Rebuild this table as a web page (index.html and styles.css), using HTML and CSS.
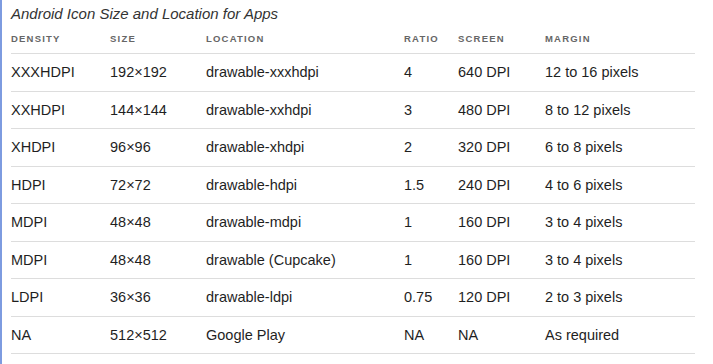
FILE: index.html
```html
<!DOCTYPE html>
<html lang="en">
<head>
  <meta charset="UTF-8" />
  <title>Android Icon Sizes</title>
  <link rel="stylesheet" href="styles.css">
</head>
<body>
  <div class="wrap">
    <table class="icons">
      <caption>Android Icon Size and Location for Apps</caption>
      <thead>
        <tr>
          <th class="c-density">Density</th>
          <th class="c-size">Size</th>
          <th class="c-loc">Location</th>
          <th class="c-ratio">Ratio</th>
          <th class="c-screen">Screen</th>
          <th>Margin</th>
        </tr>
      </thead>
      <tbody>
        <tr><td>XXXHDPI</td><td>192×192</td><td>drawable-xxxhdpi</td><td>4</td><td>640 DPI</td><td>12 to 16 pixels</td></tr>
        <tr><td>XXHDPI</td><td>144×144</td><td>drawable-xxhdpi</td><td>3</td><td>480 DPI</td><td>8 to 12 pixels</td></tr>
        <tr><td>XHDPI</td><td>96×96</td><td>drawable-xhdpi</td><td>2</td><td>320 DPI</td><td>6 to 8 pixels</td></tr>
        <tr><td>HDPI</td><td>72×72</td><td>drawable-hdpi</td><td>1.5</td><td>240 DPI</td><td>4 to 6 pixels</td></tr>
        <tr><td>MDPI</td><td>48×48</td><td>drawable-mdpi</td><td>1</td><td>160 DPI</td><td>3 to 4 pixels</td></tr>
        <tr><td>MDPI</td><td>48×48</td><td>drawable (Cupcake)</td><td>1</td><td>160 DPI</td><td>3 to 4 pixels</td></tr>
        <tr><td>LDPI</td><td>36×36</td><td>drawable-ldpi</td><td>0.75</td><td>120 DPI</td><td>2 to 3 pixels</td></tr>
        <tr><td>NA</td><td>512×512</td><td>Google Play</td><td>NA</td><td>NA</td><td>As required</td></tr>
      </tbody>
    </table>
  </div>
</body>
</html>
```

FILE: styles.css
```css
body {
  margin: 0;
  background: #fff;
  font-family: "Liberation Sans", Arial, sans-serif;
  color: #1f1f1f;
}
.wrap {
  border-left: 2px solid #7d9be0;
  padding: 3px 18px 12px 9px;
  min-height: 349px;
}
.icons {
  width: 684px;
  border-collapse: collapse;
  table-layout: fixed;
}
.icons caption {
  text-align: left;
  font-style: italic;
  font-size: 15px;
  color: #333;
  padding: 2px 0 7px;
}
.icons th {
  text-align: left;
  font-size: 9.5px;
  font-weight: bold;
  letter-spacing: 1.2px;
  text-transform: uppercase;
  color: #666;
  padding: 4px 0 9px;
  border-bottom: 1px solid #ddd;
}
.icons td {
  font-size: 14.5px;
  height: 36.5px;
  padding: 0;
  border-bottom: 1px solid #ddd;
  vertical-align: middle;
}
.c-density { width: 99px; }
.c-size { width: 96px; }
.c-loc { width: 198px; }
.c-ratio { width: 54px; }
.c-screen { width: 87px; }
```
